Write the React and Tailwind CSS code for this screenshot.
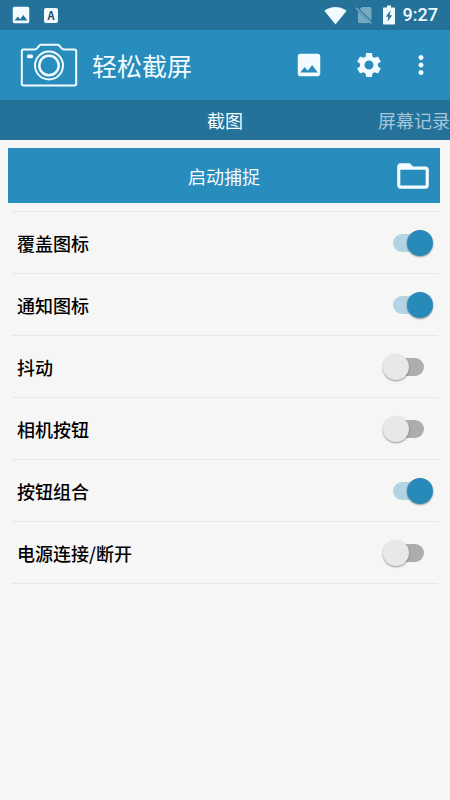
import { useState } from "react";
import {
  MdFolderOpen,
  MdImage,
  MdMoreVert,
  MdSettings,
  MdSignalWifi4Bar,
} from "react-icons/md";

const initialSettings = [
  { id: "overlay", label: "覆盖图标", enabled: true },
  { id: "notification", label: "通知图标", enabled: true },
  { id: "shake", label: "抖动", enabled: false },
  { id: "camera", label: "相机按钮", enabled: false },
  { id: "combo", label: "按钮组合", enabled: true },
  { id: "power", label: "电源连接/断开", enabled: false },
];

function CameraLogo() {
  return (
    <svg
      viewBox="0 0 58 44"
      className="h-11 w-[58px]"
      fill="none"
      stroke="currentColor"
      strokeWidth="2"
      strokeLinejoin="round"
    >
      <path d="M3.5 6.5h11.2c1.2 0 1.8-.5 2.5-1.3l2.1-2.6c.5-.6.9-.9 1.7-.9h16.6c.8 0 1.2.3 1.7.9l2.1 2.6c.7.8 1.3 1.3 2.5 1.3h10.6c1 0 1.7.7 1.7 1.7v32.6c0 1-.7 1.7-1.7 1.7h-51c-1 0-1.7-.7-1.7-1.7V8.2c0-1 .7-1.7 1.7-1.7z" />
      <circle cx="29" cy="22.5" r="14" />
      <circle cx="29" cy="22.5" r="9.7" strokeWidth="2.5" />
      <rect x="7" y="11.5" width="6" height="3.8" rx="1.5" fill="currentColor" stroke="none" />
    </svg>
  );
}

function NoSimIcon() {
  return (
    <svg viewBox="0 0 18 18" className="h-[18px] w-[18px] opacity-40">
      <path d="M7 1h8a1.5 1.5 0 0 1 1.5 1.5v12.3L4.8 3.2z" fill="currentColor" />
      <path d="M3 5.2 15 17H4.5A1.5 1.5 0 0 1 3 15.5z" fill="currentColor" />
      <path d="M1 1.8 16.5 17.2" stroke="currentColor" strokeWidth="1.4" />
    </svg>
  );
}

function BatteryIcon() {
  return (
    <svg viewBox="0 0 12 20" className="h-5 w-3">
      <path
        fillRule="evenodd"
        fill="currentColor"
        d="M4 .5h4v2h3c.6 0 1 .4 1 1v15c0 .6-.4 1-1 1H1c-.6 0-1-.4-1-1v-15c0-.6.4-1 1-1h3zM7.6 5.5 2.8 11.8h2.6l-1 4.7 4.9-6.3H6.7z"
      />
    </svg>
  );
}

function StatusBar() {
  return (
    <div className="flex h-[30px] items-center justify-between bg-[#24729a] pr-3 pl-2.5">
      <div className="flex items-center gap-3">
        <MdImage className="size-[22px]" />
        <span className="flex h-[15px] w-3.5 items-center justify-center rounded-[2px] bg-[#f2fbff] text-[11px] leading-none font-bold text-[#24506c]">
          A
        </span>
      </div>
      <div className="flex items-center gap-2">
        <MdSignalWifi4Bar className="size-[23px]" />
        <NoSimIcon />
        <div className="flex items-center gap-2 pl-0.5">
          <BatteryIcon />
          <span className="font-['Roboto',sans-serif] text-[18px] leading-5 font-medium">9:27</span>
        </div>
      </div>
    </div>
  );
}

function Toolbar() {
  return (
    <header className="flex h-[70px] items-center justify-between bg-[#288cbc] pr-3.5 pl-5">
      <div className="flex items-center gap-3.5">
        <CameraLogo />
        <h1 className="text-[25px] leading-8">轻松截屏</h1>
      </div>
      <div className="flex items-center">
        <button type="button" aria-label="图库" className="mr-[30px]">
          <MdImage className="size-[30px]" />
        </button>
        <button type="button" aria-label="设置" className="mr-[22px]">
          <MdSettings className="size-[30px]" />
        </button>
        <button type="button" aria-label="更多">
          <MdMoreVert className="size-[30px]" />
        </button>
      </div>
    </header>
  );
}

function Tabs() {
  return (
    <nav className="grid h-10 grid-cols-3 items-center bg-[#24729a] text-[18px] leading-6">
      <button type="button" className="col-start-2">
        截图
      </button>
      <button type="button" className="text-right text-[#a3c6da]">
        屏幕记录
      </button>
    </nav>
  );
}

function SettingRow({ id, label, enabled, onToggle }) {
  return (
    <li className="flex h-[62px] items-center justify-between border-b border-[#e7e7e7] px-[5px]">
      <label htmlFor={id} className="text-[18px] leading-6 font-medium text-black">
        {label}
      </label>
      <input
        id={id}
        type="checkbox"
        checked={enabled}
        onChange={onToggle}
        className="relative h-[26px] w-[50px] appearance-none before:absolute before:top-1 before:left-2.5 before:h-[18px] before:w-[31px] before:rounded-full before:bg-[#adadad] after:absolute after:top-0 after:left-0 after:size-[26px] after:rounded-full after:bg-[#e8e8e8] after:shadow-[0_1px_2px_rgba(0,0,0,0.4)] checked:before:bg-[#b3d4e2] checked:after:left-6 checked:after:bg-[#288ab8]"
      />
    </li>
  );
}

export default function App() {
  const [settings, setSettings] = useState(initialSettings);

  const toggle = (id) => {
    setSettings((prev) =>
      prev.map((item) => (item.id === id ? { ...item, enabled: !item.enabled } : item))
    );
  };

  return (
    <div className="min-h-screen bg-[#f6f6f6] font-['Noto_Sans_CJK_SC',sans-serif] text-[#f2fbff]">
      <StatusBar />
      <Toolbar />
      <Tabs />

      <main className="pt-2 pr-2.5 pl-2">
        {/* Start capture + output folder */}
        <div className="grid h-[55px] grid-cols-[1fr_auto_1fr] items-center bg-[#288cbc] px-2 text-[18px] leading-6">
          <button type="button" className="col-start-2">
            启动捕捉
          </button>
          <button type="button" aria-label="文件夹" className="justify-self-end">
            <MdFolderOpen className="size-[38px]" />
          </button>
        </div>

        {/* Capture triggers */}
        <ul className="mt-2 mr-0.5 ml-1 border-t border-[#e7e7e7]">
          {settings.map((item) => (
            <SettingRow key={item.id} {...item} onToggle={() => toggle(item.id)} />
          ))}
        </ul>
      </main>
    </div>
  );
}
